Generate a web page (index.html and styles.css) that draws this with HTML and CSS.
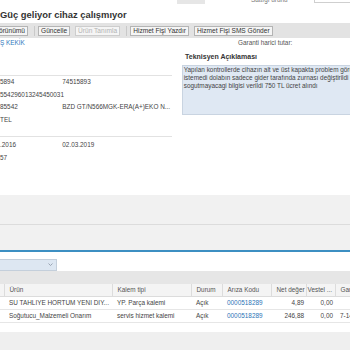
FILE: index.html
```html
<!DOCTYPE html>
<html lang="tr">

<head>
    <meta charset="UTF-8">
    <meta name="viewport" content="width=device-width, initial-scale=1.0">
    <title>Servis Kaydı</title>
    <link rel="stylesheet" href="styles.css">
</head>

<body>
    <div class="topbar">
        <span class="top-blob"></span>
        <span class="top-label">Sattığı ürünü</span>
        <span class="top-input"></span>
    </div>

    <h1 class="title">Güç geliyor cihaz çalışmıyor</h1>

    <div class="toolbar">
        <button class="btn btn-first">örünümü</button>
        <span class="sep"></span>
        <button class="btn">Güncelle</button>
        <button class="btn" disabled>Ürün Tanımla</button>
        <span class="sep"></span>
        <button class="btn">Hizmet Fişi Yazdır</button>
        <button class="btn">Hizmet Fişi SMS Gönder</button>
    </div>

    <div class="form">
        <div class="form-left">
            <a class="customer" href="#">Ş KEKİK</a>
            <div class="group group-main">
                <div class="row"><span>5894</span><span>74515893</span></div>
                <div class="row"><span>554296013245450031</span><span></span></div>
                <div class="row"><span>85542</span><span>BZD GT/N566MGK-ERA(A+)EKO N...</span></div>
                <div class="row"><span>TEL</span><span></span></div>
            </div>
            <div class="group group-dates">
                <div class="row"><span>.2016</span><span>02.03.2019</span></div>
                <div class="row"><span>57</span><span></span></div>
            </div>
        </div>
        <div class="form-right">
            <div class="garanti">Garanti harici tutar:</div>
            <div class="tek-title">Teknisyen Açıklaması</div>
            <div class="note">
                Yapılan kontrollerde cihazın alt ve üst kapakta problem görülmedi müşteri<br>
                istemedi dolabın sadece gider tarafında zurnası değiştirildi kullanıcıya<br>
                sogutmayacagi bilgisi verildi 750 TL ücret alındı
            </div>
        </div>
    </div>

    <div class="panel panel-a"></div>
    <div class="panel panel-b"></div>

    <div class="filter">
        <div class="select">
            <svg width="5" height="3" viewBox="0 0 5 3"><path d="M0.5 0.5 L2.5 2.5 L4.5 0.5" fill="none" stroke="#8a96a3" stroke-width="0.8"/></svg>
        </div>
    </div>

    <div class="grid-toolbar"></div>

    <table class="items">
        <colgroup>
            <col class="c-sel">
            <col class="c-urun">
            <col class="c-kalem">
            <col class="c-durum">
            <col class="c-ariza">
            <col class="c-net">
            <col class="c-vestel">
            <col class="c-gar">
        </colgroup>
        <thead>
            <tr>
                <th></th>
                <th>Ürün</th>
                <th>Kalem tipi</th>
                <th>Durum</th>
                <th>Arıza Kodu</th>
                <th>Net değer</th>
                <th class="th-tight">Vestel ...</th>
                <th>Garanti</th>
            </tr>
        </thead>
        <tbody>
            <tr>
                <td></td>
                <td>SU TAHLIYE HORTUM YENI DIY...</td>
                <td>YP. Parça kalemi</td>
                <td>Açık</td>
                <td><a class="code" href="#">0000518289</a></td>
                <td class="num">4,89</td>
                <td class="num">0,00</td>
                <td></td>
            </tr>
            <tr>
                <td></td>
                <td>Soğutucu_Malzemeli Onarım</td>
                <td>servis hizmet kalemi</td>
                <td>Açık</td>
                <td><a class="code" href="#">0000518289</a></td>
                <td class="num">246,88</td>
                <td class="num">0,00</td>
                <td>7-14</td>
            </tr>
        </tbody>
    </table>

    <div class="empty"></div>
    <div class="footer"></div>
</body>

</html>
```

FILE: styles.css
```css
body {
    margin: 0;
    width: 350px;
    height: 350px;
    overflow: hidden;
    background: #fff;
    font-family: "Liberation Sans", Arial, sans-serif;
    font-size: 6.4px;
    color: #444;
}

.topbar {
    height: 4px;
    overflow: hidden;
    display: flex;
    align-items: flex-end;
}

.top-blob {
    width: 28px;
    height: 8px;
    margin-left: 177px;
    background: #e6e6e6;
}

.top-label {
    margin-left: 46px;
    margin-bottom: 3px;
    line-height: 2px;
    color: #777;
}

.top-input {
    margin-left: auto;
    margin-bottom: 1px;
    width: 35px;
    height: 10px;
    border: 1px solid #cfcfcf;
    border-right: none;
}

.title {
    margin: 0;
    padding-top: 5px;
    font-size: 9.4px;
    line-height: 12px;
    font-weight: bold;
    color: #333;
}

.toolbar {
    margin-top: 2px;
    height: 15px;
    background: #e3e3e3;
    display: flex;
    align-items: center;
}

.btn {
    font-family: inherit;
    font-size: 6.6px;
    height: 10px;
    line-height: 8px;
    padding: 0 2px;
    margin: 0 0 0 5px;
    border: 1px solid #b4b4b4;
    background: #f5f5f5;
    color: #333;
}

.btn-first {
    margin-left: -4px;
}

.btn:disabled {
    color: #b3b3b3;
    border-color: #cdcdcd;
}

.sep {
    width: 1px;
    height: 10px;
    margin: 0 3px 0 6px;
    background: #c9c9c9;
}

.sep + .btn {
    margin-left: 0;
}

.form {
    display: grid;
    grid-template-columns: 172px 1fr;
    column-gap: 9.7px;
}

.customer {
    display: block;
    line-height: 10px;
    color: #3079bd;
    text-decoration: none;
}

.group {
    border-top: 1px solid #e2e2e2;
}

.group-main {
    margin-top: 27px;
}

.group-dates {
    margin-top: 10px;
    padding-top: 2px;
}

.row {
    display: grid;
    grid-template-columns: 62.3px 1fr;
    line-height: 12.5px;
    white-space: nowrap;
}

.garanti {
    line-height: 10px;
    padding-left: 56.3px;
    color: #555;
}

.tek-title {
    margin-top: 3.7px;
    padding-left: 3.3px;
    line-height: 10px;
    font-size: 7px;
    font-weight: bold;
    color: #333;
}

.note {
    margin-top: 3.3px;
    height: 50px;
    box-sizing: border-box;
    padding: 0 1px;
    background: #dfe8f3;
    border: 1px solid #c9d4e1;
    border-right: none;
    line-height: 7.8px;
    color: #444;
    white-space: nowrap;
    overflow: hidden;
}

.panel {
    background: #f1f1f1;
}

.panel-a {
    margin-top: 30.7px;
    height: 29px;
    border-bottom: 1px solid #dcdcdc;
}

.panel-b {
    height: 25px;
    border-bottom: 2px solid #3c8fc2;
}

.filter {
    padding-top: 7px;
}

.select {
    width: 57px;
    height: 12px;
    box-sizing: border-box;
    padding-right: 3px;
    background: #dde7f2;
    border: 1px solid #c4cfdb;
    border-left: none;
    display: flex;
    align-items: center;
    justify-content: flex-end;
}

.grid-toolbar {
    height: 13px;
    background: #e6e6e6;
}

.items {
    width: 365px;
    table-layout: fixed;
    border-collapse: collapse;
}

.c-sel { width: 4px; }
.c-urun { width: 108px; }
.c-kalem { width: 79px; }
.c-durum { width: 31px; }
.c-ariza { width: 49px; }
.c-net { width: 35px; }
.c-vestel { width: 29px; }
.c-gar { width: 30px; }

.items th,
.items td {
    height: 12px;
    padding: 0 0 0 5px;
    white-space: nowrap;
    overflow: hidden;
}

.items td {
    text-overflow: ellipsis;
}

.items th {
    background: #f4f4f4;
    font-weight: normal;
    text-align: left;
    color: #555;
    border-bottom: 1px solid #dcdcdc;
    border-right: 1px solid #dcdcdc;
}

.items th.th-tight {
    padding-left: 1px;
}

.items td {
    border-bottom: 1px solid #e6e6e6;
}

.items th:first-child,
.items td:first-child {
    padding: 0;
}

.items td.num {
    text-align: right;
    padding: 0 2px 0 0;
}

.code {
    color: #2c74b6;
    text-decoration: none;
}

.empty {
    height: 9px;
}

.footer {
    height: 20px;
    background: #efefef;
}
```
